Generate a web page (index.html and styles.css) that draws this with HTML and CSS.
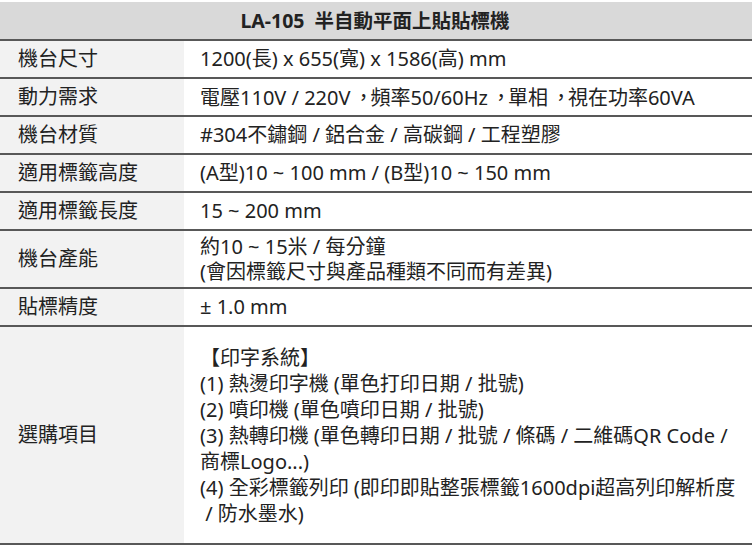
FILE: index.html
```html
<!DOCTYPE html>
<html lang="zh-TW">
<head>
<meta charset="utf-8">
<link rel="stylesheet" href="styles.css">
</head>
<body>
<div class="spec">
  <div class="head">LA-105&nbsp; 半自動平面上貼貼標機</div>
  <div class="row"><div class="lab">機台尺寸</div><div class="val">1200(長) x 655(寬) x 1586(高) mm</div></div>
  <div class="row"><div class="lab">動力需求</div><div class="val"><span>電壓110V / 220V<span class="cm">，</span>頻率50/60Hz<span class="cm">，</span>單相<span class="cm">，</span>視在功率60VA</span></div></div>
  <div class="row"><div class="lab">機台材質</div><div class="val">#304不鏽鋼 / 鋁合金 / 高碳鋼 / 工程塑膠</div></div>
  <div class="row"><div class="lab">適用標籤高度</div><div class="val">(A型)10 ~ 100 mm / (B型)10 ~ 150 mm</div></div>
  <div class="row"><div class="lab">適用標籤長度</div><div class="val">15 ~ 200 mm</div></div>
  <div class="row tall"><div class="lab">機台產能</div><div class="val two"><span class="ln">約10 ~ 15米 / 每分鐘</span><span class="ln">(會因標籤尺寸與產品種類不同而有差異)</span></div></div>
  <div class="row"><div class="lab">貼標精度</div><div class="val">± 1.0 mm</div></div>
  <div class="row opts"><div class="lab">選購項目</div><div class="val list">
    <span class="ln">【印字系統】</span>
    <span class="ln">(1) 熱燙印字機 (單色打印日期 / 批號)</span>
    <span class="ln">(2) 噴印機 (單色噴印日期 / 批號)</span>
    <span class="ln">(3) 熱轉印機 (單色轉印日期 / 批號 / 條碼 / 二維碼QR Code /</span>
    <span class="ln">商標Logo...)</span>
    <span class="ln">(4) 全彩標籤列印 (即印即貼整張標籤1600dpi超高列印解析度</span>
    <span class="ln">&nbsp;/ 防水墨水)</span>
  </div></div>
</div>
</body>
</html>
```

FILE: styles.css
```css
html, body {
  margin: 0;
  padding: 0;
  background: #ffffff;
}
body {
  font-family: "Noto Sans", "Noto Sans CJK TC", sans-serif;
  font-size: 20px;
  color: #222222;
}
.spec {
  width: 752px;
  margin-top: 2px;
}
.head {
  height: 37px;
  background: #d9d9d9;
  border-bottom: 2px solid #585858;
  display: flex;
  align-items: center;
  justify-content: center;
  font-weight: bold;
  font-size: 19.5px;
  line-height: 24px;
  padding-right: 2px;
}
.row {
  display: grid;
  grid-template-columns: 184px 1fr;
  height: 36px;
  border-bottom: 2px solid #585858;
}
.row.tall {
  height: 56px;
}
.row.opts {
  height: 216px;
}
.lab {
  background: #f2f2f2;
  padding-left: 18px;
  display: flex;
  align-items: center;
  line-height: 24px;
}
.val {
  padding-left: 16px;
  display: flex;
  flex-direction: column;
  justify-content: center;
  line-height: 24px;
  white-space: nowrap;
}
.val.two {
  line-height: 25px;
}
.ln {
  display: block;
}
.cm {
  font-family: "Noto Sans CJK TC", sans-serif;
  padding-left: 0.15em;
  letter-spacing: -0.15em;
}
.list {
  line-height: 26px;
  padding-top: 2px;
}
```
